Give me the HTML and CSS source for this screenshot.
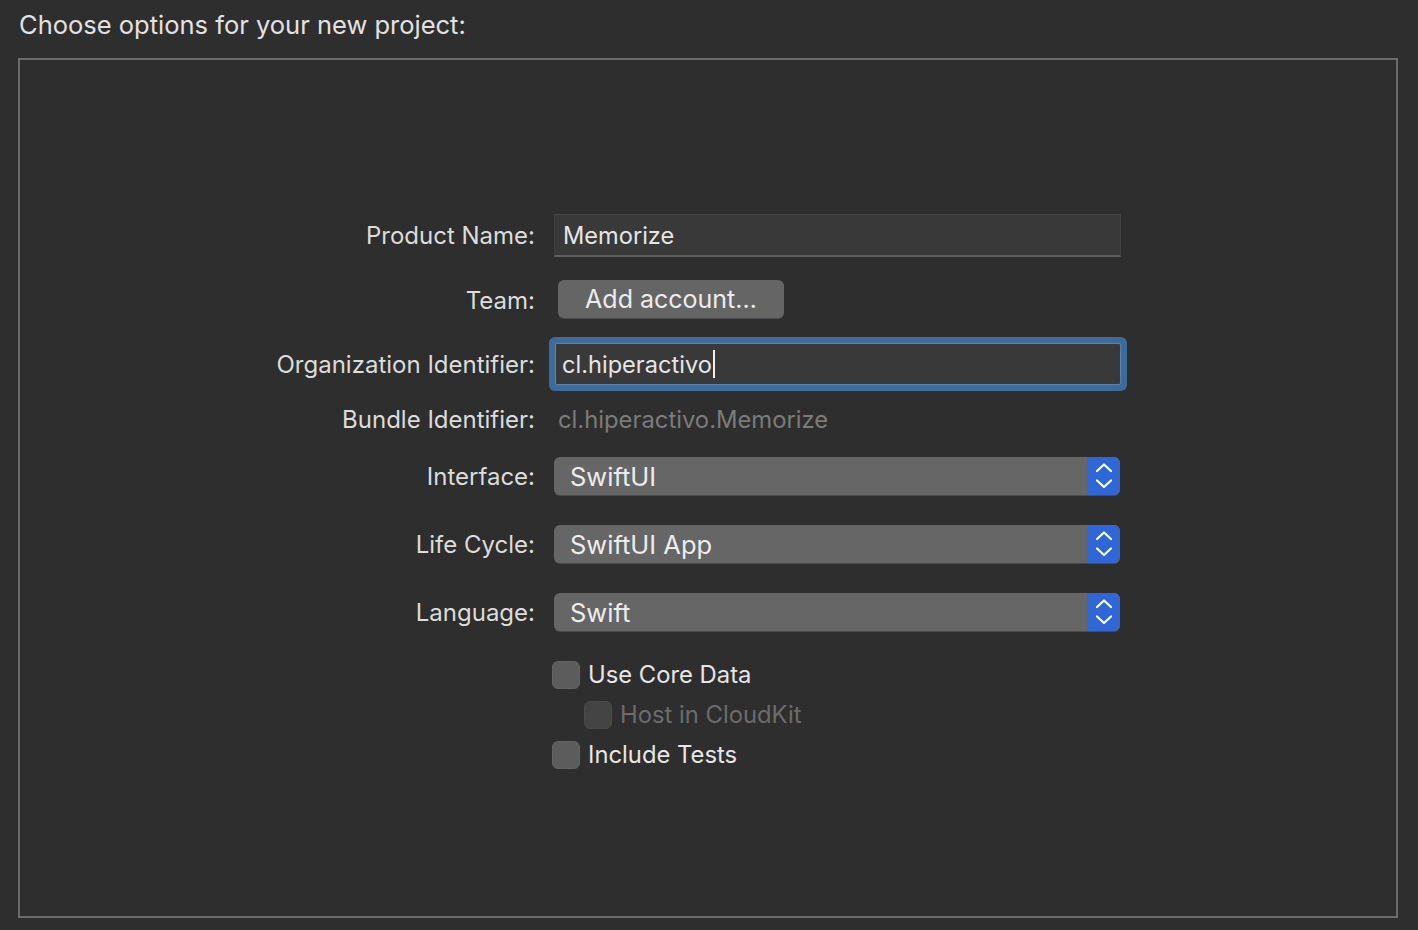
FILE: index.html
```html
<!DOCTYPE html>
<html>
<head>
<meta charset="utf-8">
<link rel="stylesheet" href="styles.css">
</head>
<body>
<h1 class="title">Choose options for your new project:</h1>
<div class="panel">
  <div class="form">
    <div class="row r-name">
      <div class="label">Product Name:</div>
      <div class="field"><span>Memorize</span></div>
    </div>
    <div class="row r-team">
      <div class="label">Team:</div>
      <div class="ctl"><button class="btn">Add account…</button></div>
    </div>
    <div class="row r-org">
      <div class="label">Organization Identifier:</div>
      <div class="ctl"><div class="field focused"><span>cl.hiperactivo</span><i class="caret"></i></div></div>
    </div>
    <div class="row r-bundle">
      <div class="label">Bundle Identifier:</div>
      <div class="value">cl.hiperactivo.Memorize</div>
    </div>
    <div class="row r-pop">
      <div class="label">Interface:</div>
      <div class="popup"><span class="ptext">SwiftUI</span><span class="arrows"><svg width="33" height="38" viewBox="0 0 33 38"><path d="M10 14 L17 7.5 L24 14 M10 23.5 L17 30 L24 23.5" fill="none" stroke="#fff" stroke-width="2.2" stroke-linecap="round" stroke-linejoin="round"/></svg></span></div>
    </div>
    <div class="row r-pop r-gap">
      <div class="label">Life Cycle:</div>
      <div class="popup"><span class="ptext">SwiftUI App</span><span class="arrows"><svg width="33" height="38" viewBox="0 0 33 38"><path d="M10 14 L17 7.5 L24 14 M10 23.5 L17 30 L24 23.5" fill="none" stroke="#fff" stroke-width="2.2" stroke-linecap="round" stroke-linejoin="round"/></svg></span></div>
    </div>
    <div class="row r-pop r-gap">
      <div class="label">Language:</div>
      <div class="popup"><span class="ptext">Swift</span><span class="arrows"><svg width="33" height="38" viewBox="0 0 33 38"><path d="M10 14 L17 7.5 L24 14 M10 23.5 L17 30 L24 23.5" fill="none" stroke="#fff" stroke-width="2.2" stroke-linecap="round" stroke-linejoin="round"/></svg></span></div>
    </div>
    <div class="row r-check first">
      <div class="label"></div>
      <label class="check"><span class="box"></span><span>Use Core Data</span></label>
    </div>
    <div class="row r-check">
      <div class="label"></div>
      <label class="check sub disabled"><span class="box"></span><span>Host in CloudKit</span></label>
    </div>
    <div class="row r-check">
      <div class="label"></div>
      <label class="check"><span class="box"></span><span>Include Tests</span></label>
    </div>
  </div>
</div>
</body>
</html>
```
FILE: styles.css
```css
html, body {
  margin: 0;
  padding: 0;
  background: #2e2e2e;
  width: 1418px;
  height: 930px;
  overflow: hidden;
  font-family: Inter, "Noto Sans", sans-serif;
  color: #dedede;
}

.title {
  margin: 10px 0 18px 19px;
  height: 30px;
  line-height: 30px;
  font-size: 25.5px;
  font-weight: 400;
  color: #e2e2e2;
}

.panel {
  box-sizing: border-box;
  margin-left: 18px;
  width: 1380px;
  height: 860px;
  border: 2px solid #6c6c6c;
}

.form {
  padding-top: 154px;
  display: flex;
  flex-direction: column;
}

.row {
  display: grid;
  grid-template-columns: 515px 567px;
  column-gap: 19px;
  align-items: center;
}

.label {
  text-align: right;
  font-size: 24px;
  color: #dcdcdc;
  white-space: nowrap;
}

.r-name { height: 43px; }
.r-team { height: 38px; margin-top: 23px; }
.r-team .label { padding-top: 3px; }
.r-org { height: 54px; margin-top: 19px; }
.r-bundle { height: 26px; margin-top: 14px; }
.r-pop { height: 38px; margin-top: 26px; }
.r-gap { margin-top: 30px; }
.r-check { height: 28px; margin-top: 12px; }
.r-check.first { margin-top: 29px; }

.field {
  box-sizing: border-box;
  height: 43px;
  background: #393939;
  border-top: 1px solid #474747;
  border-bottom: 2px solid #5f5f5f;
  border-left: 1px solid #404040;
  border-right: 1px solid #404040;
  display: flex;
  align-items: center;
  padding-left: 8px;
  font-size: 23.6px;
  color: #e6e6e6;
}

.field.focused {
  margin-left: 1px;
  width: 566px;
  height: 42px;
  padding-left: 6px;
  border: 1px solid #5a83ad;
  box-shadow: 0 0 0 6px #3d6c9b;
  border-radius: 2px;
}

.caret {
  display: inline-block;
  width: 2px;
  height: 28px;
  background: #f0f0f0;
  margin-left: 1px;
}

.btn {
  margin-left: 4px;
  width: 226px;
  height: 38px;
  border: none;
  border-radius: 6px;
  background: #656565;
  color: #ececec;
  font-family: Inter, "Noto Sans", sans-serif;
  font-size: 25px;
  padding: 0;
  box-shadow: 0 1px 0 #4a4a4a;
}

.value {
  padding-left: 4px;
  font-size: 23.8px;
  color: #7b7b7b;
}

.popup {
  box-sizing: border-box;
  width: 566px;
  height: 38px;
  border-radius: 6px;
  background: #666666;
  display: flex;
  align-items: center;
  justify-content: space-between;
  overflow: hidden;
  box-shadow: 0 1px 0 #4c4c4c;
}

.ptext {
  padding-left: 16px;
  font-size: 25.5px;
  color: #ededed;
}

.arrows {
  width: 33px;
  height: 38px;
  background: #2f67d6;
  display: block;
}

.arrows svg { display: block; }

.check {
  display: flex;
  align-items: center;
  margin-left: -2px;
  font-size: 23.8px;
  color: #e6e6e6;
  gap: 8px;
}

.check .box {
  box-sizing: border-box;
  width: 28px;
  height: 28px;
  border-radius: 6px;
  background: #5c5c5c;
  border: 1px solid #636363;
}

.check.sub { margin-left: 30px; }

.check.disabled { color: #6b6b6b; }
.check.disabled .box {
  background: #444444;
  border-color: #4a4a4a;
}
```
